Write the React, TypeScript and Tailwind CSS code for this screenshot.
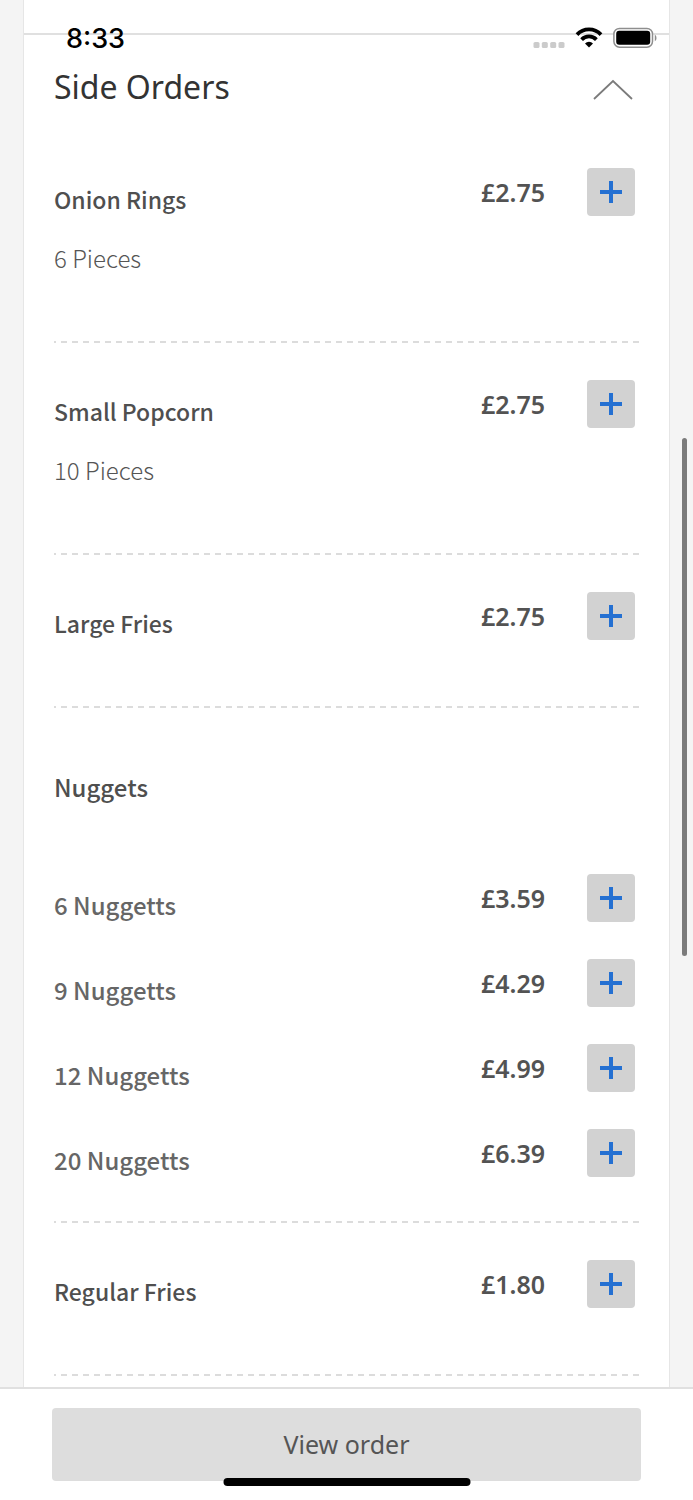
import React, { useState } from 'react';

interface Option {
  name: string;
  price: string;
}

interface MenuItem {
  name: string;
  description?: string;
  price?: string;
  options?: Option[];
}

const items: MenuItem[] = [
  { name: 'Onion Rings', description: '6 Pieces', price: '£2.75' },
  { name: 'Small Popcorn', description: '10 Pieces', price: '£2.75' },
  { name: 'Large Fries', price: '£2.75' },
  {
    name: 'Nuggets',
    options: [
      { name: '6 Nuggetts', price: '£3.59' },
      { name: '9 Nuggetts', price: '£4.29' },
      { name: '12 Nuggetts', price: '£4.99' },
      { name: '20 Nuggetts', price: '£6.39' }
    ]
  },
  { name: 'Regular Fries', price: '£1.80' }
];

const StatusBar: React.FC = () => (
  <div className="absolute inset-x-0 top-0 z-20 flex items-start justify-between pl-[66px] pr-9 pt-[23px] text-black">
    <span className="font-['Inter',sans-serif] text-[27px] leading-8 font-medium">8:33</span>
    <div className="flex items-start pt-1">
      <svg width="32" height="22" viewBox="0 0 32 22" fill="#cbcbcb" aria-hidden="true">
        <rect x="0.5" y="15" width="6" height="6" rx="1.6" />
        <rect x="8.8" y="15" width="6" height="6" rx="1.6" />
        <rect x="17.2" y="15" width="6" height="6" rx="1.6" />
        <rect x="25.5" y="15" width="6" height="6" rx="1.6" />
      </svg>
      <svg className="ml-2.5" width="28" height="22" viewBox="0 0 28 22" aria-hidden="true">
        <g fill="none" stroke="#000" strokeWidth="3.8">
          <path d="M2 7.6A16.6 16.6 0 0 1 26 7.6" />
          <path d="M6.6 12.6A10.3 10.3 0 0 1 21.4 12.6" />
        </g>
        <path d="M14 20.6l-4-4.2a5.8 5.8 0 0 1 8 0z" />
      </svg>
      <svg className="ml-2.5" width="44" height="22" viewBox="0 0 44 22" aria-hidden="true">
        <rect x="0.9" y="1.4" width="38.6" height="18.8" rx="5.6" fill="#fff" stroke="#8e8e8e" strokeWidth="1.5" />
        <rect x="3.2" y="3.8" width="34" height="14" rx="3" />
        <path d="M41.8 7.6a4 4 0 0 1 0 6.6z" fill="#8e8e8e" />
      </svg>
    </div>
  </div>
);

const AddButton: React.FC<{ label: string; onClick: () => void }> = ({ label, onClick }) => (
  <button
    aria-label={`Add ${label}`}
    onClick={onClick}
    className="flex h-12 w-12 shrink-0 items-center justify-center rounded bg-[#d2d2d2] text-[#2470d2]"
  >
    <svg width="22" height="22" viewBox="0 0 22 22" stroke="currentColor" strokeWidth="4" aria-hidden="true">
      <path d="M11 0v22M0 11h22" />
    </svg>
  </button>
);

const PriceAndAdd: React.FC<{ name: string; price: string; onAdd: () => void }> = ({ name, price, onAdd }) => (
  <div className="flex items-center gap-[42px] pr-1">
    <span className="font-['Noto_Sans',sans-serif] text-[25px] leading-8 font-semibold text-[#535353]">{price}</span>
    <AddButton label={name} onClick={onAdd} />
  </div>
);

const Divider: React.FC = () => (
  <div className="h-0.5 bg-[linear-gradient(to_right,#dcdcdc_6px,transparent_6px)] bg-[length:11px_2px] bg-[position:-4px_0]" />
);

const ItemRow: React.FC<{ item: MenuItem; onAdd: () => void }> = ({ item, onAdd }) => {
  if (item.options) {
    return (
      <li>
        <h3 className="pt-[61px] text-[24px] leading-9 font-medium text-[#4f4f4f]">{item.name}</h3>
        <ul className="flex flex-col gap-[37px] pt-[69px] pb-11">
          {item.options.map((option) => (
            <li key={option.name} className="flex items-start justify-between">
              <span className="pt-3.5 text-[24px] leading-[34px] font-medium text-[#666]">{option.name}</span>
              <PriceAndAdd name={option.name} price={option.price} onAdd={onAdd} />
            </li>
          ))}
        </ul>
        <Divider />
      </li>
    );
  }

  return (
    <li>
      <div className="flex items-start justify-between pt-[37px] pb-[66px]">
        <div className="pt-3.5">
          <h3 className="text-[23px] leading-[34px] font-medium text-[#4f4f4f]">{item.name}</h3>
          {item.description && (
            <p className="pt-[25px] text-[24px] leading-[34px] font-light text-[#555]">{item.description}</p>
          )}
        </div>
        <PriceAndAdd name={item.name} price={item.price ?? ''} onAdd={onAdd} />
      </div>
      <Divider />
    </li>
  );
};

export default function App() {
  const [open, setOpen] = useState(true);
  const [, setCount] = useState(0);

  const handleAdd = () => setCount((prev) => prev + 1);

  return (
    <div className="relative flex min-h-screen flex-col bg-[#f4f4f4] font-['Noto_Sans_CJK_SC','Noto_Sans',sans-serif]">
      <StatusBar />

      <main className="mx-[23px] flex-1 border-x border-[#e6e6e6] bg-white">
        <div className="h-[35px] border-b-2 border-[#e0e0e0]" />
        <section className="px-[30px]">
          {/* Category header */}
          <button
            aria-expanded={open}
            onClick={() => setOpen(!open)}
            className="flex h-24 w-full items-start justify-between pt-7 pr-1.5 text-left"
          >
            <span className="font-['Noto_Sans',sans-serif] text-[32px] leading-12 text-[#333]">Side Orders</span>
            <svg className="mt-4" width="40" height="22" viewBox="0 0 40 22" fill="none" stroke="#7b7b7b" strokeWidth="1.8" aria-hidden="true">
              <path d="M1 20L20 2L39 20" />
            </svg>
          </button>

          {open && (
            <ul>
              {items.map((item) => (
                <ItemRow key={item.name} item={item} onAdd={handleAdd} />
              ))}
            </ul>
          )}
        </section>
      </main>

      {/* Order bar */}
      <footer className="sticky bottom-0 border-t-2 border-[#e0e0e0] bg-white px-[52px] pt-[19px] pb-[19px]">
        <button className="h-[73px] w-full rounded bg-[#ddd] pb-0.5 font-['Noto_Sans',sans-serif] text-[25px] leading-9 text-[#555]">
          View order
        </button>
        <div className="absolute bottom-3.5 left-1/2 h-2 w-[247px] -translate-x-1/2 rounded-full bg-black" />
      </footer>

      {/* Scroll indicator */}
      <div className="absolute top-[29.2%] right-1.5 h-[34.5%] w-[5px] rounded-full bg-[#7b7b7b]" />
    </div>
  );
}
